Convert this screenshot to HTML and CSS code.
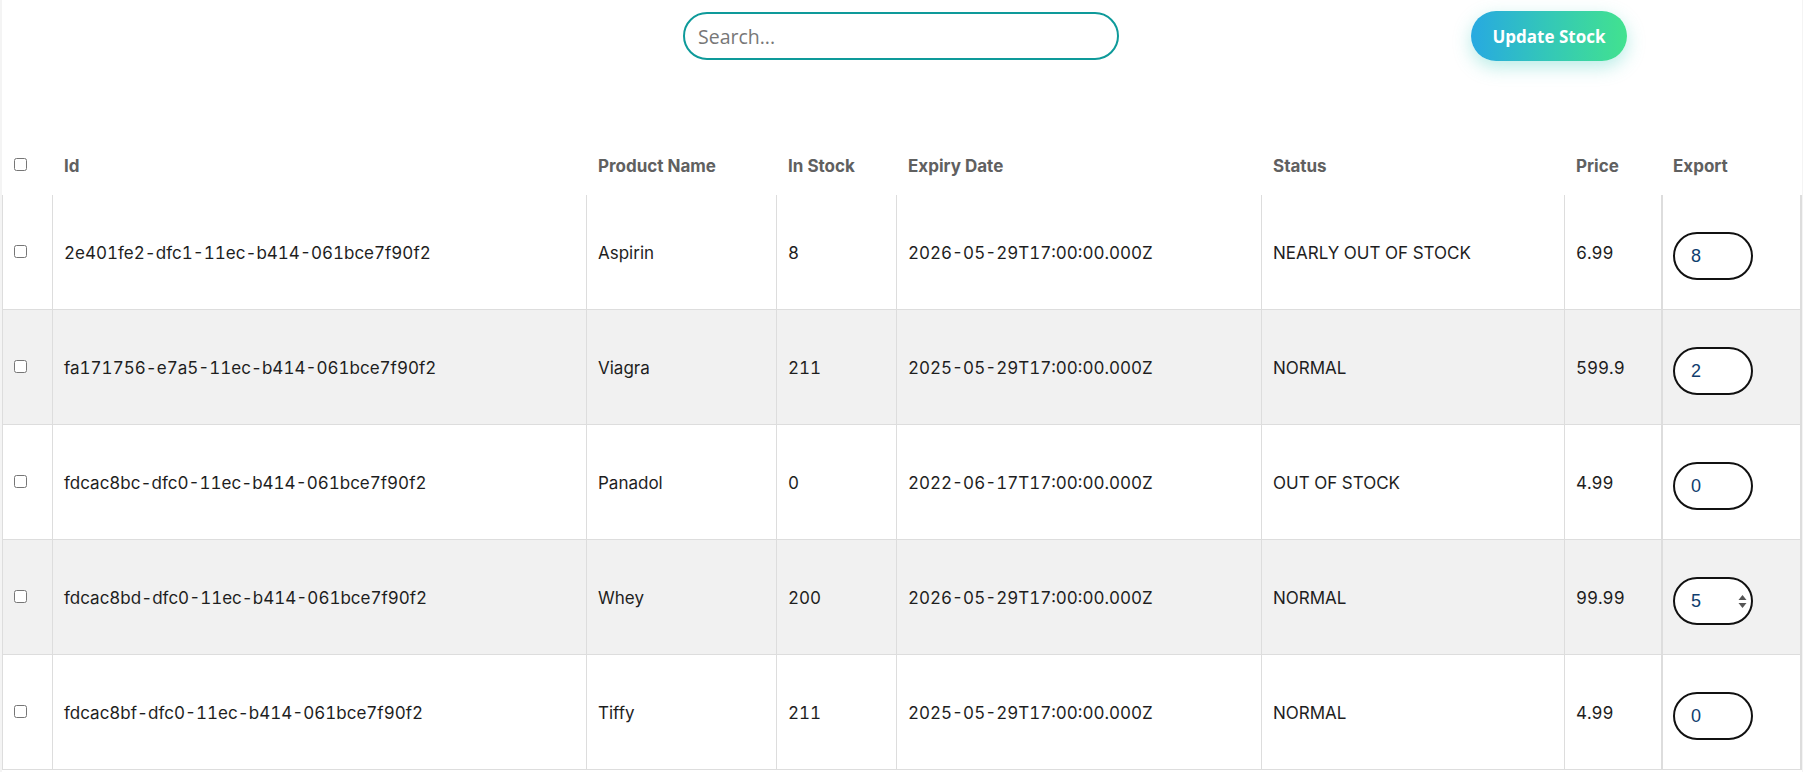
FILE: index.html
```html
<!DOCTYPE html>
<html>
<head>
<meta charset="utf-8">
<link rel="stylesheet" href="styles.css">
</head>
<body>
<div class="page">
  <div class="topbar">
    <div class="search-wrap"><input class="search" type="text" placeholder="Search..."></div>
    <div class="btn-wrap"><button class="update-btn">Update Stock</button></div>
  </div>
  <div class="grid">
    <div class="row head">
      <div class="cell chk"><input type="checkbox"></div>
      <div class="cell">Id</div>
      <div class="cell">Product Name</div>
      <div class="cell">In Stock</div>
      <div class="cell">Expiry Date</div>
      <div class="cell">Status</div>
      <div class="cell">Price</div>
      <div class="cell exp">Export</div>
    </div>
    <div class="row body">
      <div class="cell chk"><input type="checkbox"></div>
      <div class="cell">2e401fe2-dfc1-11ec-b414-061bce7f90f2</div>
      <div class="cell">Aspirin</div>
      <div class="cell">8</div>
      <div class="cell">2026-05-29T17:00:00.000Z</div>
      <div class="cell">NEARLY OUT OF STOCK</div>
      <div class="cell">6.99</div>
      <div class="cell exp"><div class="num"><input class="num-in" type="text" value="8"></div></div>
    </div>
    <div class="row body alt">
      <div class="cell chk"><input type="checkbox"></div>
      <div class="cell">fa171756-e7a5-11ec-b414-061bce7f90f2</div>
      <div class="cell">Viagra</div>
      <div class="cell">211</div>
      <div class="cell">2025-05-29T17:00:00.000Z</div>
      <div class="cell">NORMAL</div>
      <div class="cell">599.9</div>
      <div class="cell exp"><div class="num"><input class="num-in" type="text" value="2"></div></div>
    </div>
    <div class="row body">
      <div class="cell chk"><input type="checkbox"></div>
      <div class="cell">fdcac8bc-dfc0-11ec-b414-061bce7f90f2</div>
      <div class="cell">Panadol</div>
      <div class="cell">0</div>
      <div class="cell">2022-06-17T17:00:00.000Z</div>
      <div class="cell">OUT OF STOCK</div>
      <div class="cell">4.99</div>
      <div class="cell exp"><div class="num"><input class="num-in" type="text" value="0"></div></div>
    </div>
    <div class="row body alt">
      <div class="cell chk"><input type="checkbox"></div>
      <div class="cell">fdcac8bd-dfc0-11ec-b414-061bce7f90f2</div>
      <div class="cell">Whey</div>
      <div class="cell">200</div>
      <div class="cell">2026-05-29T17:00:00.000Z</div>
      <div class="cell">NORMAL</div>
      <div class="cell">99.99</div>
      <div class="cell exp"><div class="num"><input class="num-in" type="text" value="5">
        <svg class="spin" width="9" height="15" viewBox="0 0 9 15"><path d="M4.5 1 L8.5 6 L0.5 6 Z" fill="#555"/><path d="M0.5 9 L8.5 9 L4.5 14 Z" fill="#555"/></svg>
      </div></div>
    </div>
    <div class="row body">
      <div class="cell chk"><input type="checkbox"></div>
      <div class="cell">fdcac8bf-dfc0-11ec-b414-061bce7f90f2</div>
      <div class="cell">Tiffy</div>
      <div class="cell">211</div>
      <div class="cell">2025-05-29T17:00:00.000Z</div>
      <div class="cell">NORMAL</div>
      <div class="cell">4.99</div>
      <div class="cell exp"><div class="num"><input class="num-in" type="text" value="0"></div></div>
    </div>
  </div>
</div>
</body>
</html>
```
FILE: styles.css
```css
* { box-sizing: border-box; }
html, body { margin: 0; padding: 0; background: #fff; }
body { font-family: Inter, "Noto Sans", sans-serif; overflow: hidden; }

.page {
  width: 1803px;
  height: 772px;
  border-left: 2px solid #f4f4f4;
  border-right: 1px solid #f4f4f4;
}

.topbar {
  display: grid;
  grid-template-columns: 681px 436px 1fr;
  height: 135px;
  padding-top: 11px;
  align-items: start;
}
.search-wrap { grid-column: 2; padding-top: 1px; }
.search {
  width: 436px;
  height: 48px;
  border: 2px solid #0e9a9a;
  border-radius: 24px;
  padding: 0 13px;
  font-family: "Open Sans", sans-serif;
  font-size: 19.5px;
  color: #333;
  outline: none;
  background: #fff;
}
.search::placeholder { color: #777; }

.btn-wrap { grid-column: 3; padding-left: 352px; }
.update-btn {
  width: 156px;
  height: 50px;
  border: none;
  border-radius: 25px;
  background: linear-gradient(90deg, #27a9e1 0%, #34c8b7 50%, #42e28f 100%);
  color: #fff;
  font-family: "Open Sans", sans-serif;
  font-weight: 700;
  font-size: 17px;
  box-shadow: 0 6px 18px rgba(52, 200, 183, 0.35);
  cursor: pointer;
}

.grid { display: flex; flex-direction: column; }
.row {
  display: grid;
  grid-template-columns: 50px 534px 190px 120px 365px 303px 97px 141px;
}
.cell {
  display: flex;
  align-items: center;
  padding-left: 11px;
  white-space: nowrap;
}
.head { height: 60px; }
.head .cell {
  font-weight: 700;
  font-size: 17px;
  color: #606060;
  padding-left: 12px;
  padding-top: 1px;
}
.head .cell.chk { padding-left: 8px; padding-top: 0; margin-top: -2px; }

.body { height: 115px; }
.body .cell {
  border-left: 1px solid #ddd;
  border-bottom: 1px solid #ddd;
  font-size: 17px;
  font-variant-numeric: tabular-nums;
  color: #1e1e1e;
  padding-top: 2px;
}
.body .cell.chk { padding-left: 7px; padding-top: 0; }
.body .cell.exp {
  border-left: 2px solid #ddd;
  border-right: 2px solid #ddd;
  padding-left: 10px;
  padding-top: 0;
}
.alt { background: #f1f1f1; }

.chk input { margin: 0 0 0 4px; width: 13px; height: 13px; }
.body .chk input { margin-top: -2px; }

.num { position: relative; margin-top: 8px; }
.num-in {
  width: 80px;
  height: 48px;
  border: 2px solid #111;
  border-radius: 24px;
  padding: 0 0 0 16px;
  font-family: "Liberation Sans", Arial, sans-serif;
  font-size: 18px;
  color: #0f3d6e;
  background: #fff;
  outline: none;
}
.spin { position: absolute; left: 65px; top: 17px; }
```
